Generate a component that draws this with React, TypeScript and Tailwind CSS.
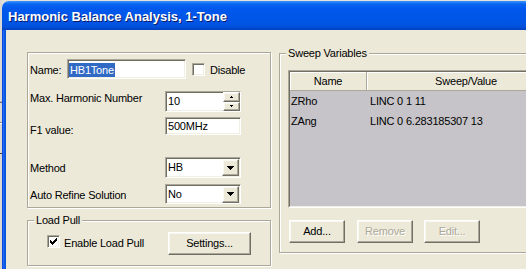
import React from "react";

const Arrow = () => (
  <svg width="7" height="4" viewBox="0 0 7 4" shapeRendering="crispEdges">
    <path d="M0 0h7v1H0zM1 1h5v1H1zM2 2h3v1H2zM3 3h1v1H3z" fill="#000" />
  </svg>
);
const SmallUp = () => (
  <svg width="5" height="3" viewBox="0 0 5 3" shapeRendering="crispEdges">
    <path d="M2 0h1v1H2zM1 1h3v1H1z" fill="#000" />
  </svg>
);
const SmallDown = () => (
  <svg width="5" height="3" viewBox="0 0 5 3" shapeRendering="crispEdges">
    <path d="M1 0h3v1H1zM2 1h1v1H2z" fill="#000" />
  </svg>
);

const sunken =
  "border border-t-[#aca899] border-l-[#aca899] border-b-white border-r-white shadow-[inset_1px_1px_0_#716f64,inset_-1px_-1px_0_#f1efe2] bg-white";
const raised =
  "border border-t-white border-l-white border-b-[#716f64] border-r-[#716f64] shadow-[inset_-1px_-1px_0_#aca899,inset_1px_1px_0_#f9f8f3] bg-[#ece9d8]";
const etched = "border border-[#aca899] shadow-[inset_1px_1px_0_#fff,1px_1px_0_#fff]";

function CheckBox({ checked }: { checked?: boolean }) {
  return (
    <div className={`w-[13px] h-[13px] shrink-0 flex items-center justify-center ${sunken}`}>
      {checked && (
        <svg width="7" height="7" viewBox="0 0 7 7" shapeRendering="crispEdges">
          <path
            d="M6 0h1v1H6zM5 1h2v1H5zM0 2h1v1H0zM4 2h3v1H4zM0 3h2v1H0zM3 3h3v1H3zM0 4h5v1H0zM1 5h3v1H1zM2 6h1v1H2z"
            fill="#000"
          />
        </svg>
      )}
    </div>
  );
}

function Combo({ value, h }: { value: string; h: string }) {
  return (
    <div className={`w-[76px] ${h} flex items-center ${sunken}`}>
      <span className="flex-1 pl-[2px]">{value}</span>
      <div className={`w-[17px] h-[17px] mr-[1px] flex items-center justify-center ${raised}`}>
        <Arrow />
      </div>
    </div>
  );
}

function Button({ label, w, disabled }: { label: string; w: string; disabled?: boolean }) {
  return (
    <div
      className={`${w} h-[23px] shrink-0 flex items-center justify-center ${raised} ${
        disabled ? "text-[#aca899] [text-shadow:1px_1px_0_#fff]" : ""
      }`}
    >
      {label}
    </div>
  );
}

function DesktopStrip() {
  return (
    <div className="w-[2px] shrink-0 flex flex-col bg-[#dad8d2]">
      <div className="h-[101px]" />
      <div className="h-[1px] bg-[#a6b8d8]" />
      <div className="h-[1px] bg-[#6d6d6d]" />
      <div className="h-[19px]" />
      <div className="h-[1px] bg-[#8c8c8c]" />
      <div className="h-[1px] bg-white" />
      <div className="h-[29px]" />
      <div className="h-[1px] bg-[#404040]" />
    </div>
  );
}

export default function App() {
  return (
    <div className="w-[526px] h-[269px] overflow-hidden flex bg-[#e2e0da] font-['Liberation_Sans',Arial,sans-serif] text-[11px] leading-[13px] tracking-[-0.2px] text-black">
      <DesktopStrip />
      <div className="flex-1 min-w-0 flex flex-col mt-[1px] rounded-tl-[7px] overflow-hidden">
        <div className="h-[29px] shrink-0 pl-[6px] pt-[8px] bg-[linear-gradient(to_bottom,#3d95ff_0%,#0a66f0_10%,#0058ee_25%,#0055e5_70%,#0052dd_88%,#0040bd_100%)] text-white font-bold text-[13px] leading-[15px] tracking-normal [text-shadow:1px_1px_0_#0a1a6b] whitespace-nowrap">
          Harmonic Balance Analysis, 1-Tone
        </div>
        <div className="flex-1 flex min-h-0">
          <div className="w-[4px] shrink-0 bg-[linear-gradient(to_right,#0831d9,#1c6bf0,#0a5be4,#0a4fd6)]" />
          <div className="flex-1 min-w-0 overflow-hidden bg-[#ece9d8] pl-[21px] pt-[17px] flex items-start">
            {/* Left column */}
            <div className="w-[244px] shrink-0 mt-[5px] flex flex-col">
              <div className={`h-[156px] pl-[2px] flex flex-col ${etched}`}>
                <div className="mt-[6px] flex items-start h-[20px]">
                  <span className="w-[37px] mt-[5px]">Name:</span>
                  <div className={`w-[119px] h-[20px] pl-[1px] pt-[3px] ${sunken}`}>
                    <span className="inline-block h-[14px] leading-[14px] px-[1px] bg-[#316ac5] text-white">HB1Tone</span>
                  </div>
                  <div className="ml-[6px] mt-[4px]">
                    <CheckBox />
                  </div>
                  <span className="ml-[5px] mt-[5px]">Disable</span>
                </div>
                <div className="mt-[12px] flex items-start">
                  <span className="w-[135px] mt-[1px]">Max. Harmonic Number</span>
                  <div className={`w-[76px] h-[21px] flex ${sunken}`}>
                    <span className="flex-1 pl-[2px] self-center">10</span>
                    <div className="w-[17px] flex flex-col">
                      <div className={`h-[10px] flex items-center justify-center ${raised}`}>
                        <SmallUp />
                      </div>
                      <div className={`h-[9px] flex items-center justify-center ${raised}`}>
                        <SmallDown />
                      </div>
                    </div>
                  </div>
                </div>
                <div className="mt-[5px] flex items-start">
                  <span className="w-[135px] mt-[7px]">F1 value:</span>
                  <div className={`w-[76px] h-[18px] flex items-center pl-[2px] ${sunken}`}>500MHz</div>
                </div>
                <div className="mt-[20px] flex items-start">
                  <span className="w-[135px] mt-[5px]">Method</span>
                  <Combo value="HB" h="h-[21px]" />
                </div>
                <div className="mt-[6px] flex items-start">
                  <span className="w-[135px] mt-[5px]">Auto Refine Solution</span>
                  <Combo value="No" h="h-[20px]" />
                </div>
              </div>
              <fieldset className={`mt-[6px] m-0 p-0 pb-[10px] min-w-0 ${etched}`}>
                <legend className="ml-[6px] px-[2px] bg-[#ece9d8]">Load Pull</legend>
                <div className="mt-[5px] pl-[19px] flex items-start">
                  <div className="mt-[3px]">
                    <CheckBox checked />
                  </div>
                  <span className="ml-[4px] mt-[5px] w-[104px]">Enable Load Pull</span>
                  <Button label="Settings..." w="w-[83px]" />
                </div>
              </fieldset>
            </div>
            {/* Right group */}
            <fieldset className={`ml-[8px] w-[270px] shrink-0 m-0 p-0 pb-[9px] min-w-0 ${etched}`}>
              <legend className="ml-[6px] px-[2px] bg-[#ece9d8]">Sweep Variables</legend>
              <div className="mt-[10px] ml-[8px] w-[260px] h-[138px] border border-t-[#aca899] border-l-[#aca899] border-b-white border-r-white">
                <div className="w-full h-full border border-t-[#716f64] border-l-[#716f64] border-b-[#f1efe2] border-r-[#f1efe2] bg-[#c6c4c8] flex flex-col">
                  <div className="h-[19px] flex shrink-0">
                    <div className="w-[77px] shrink-0 flex items-center justify-center bg-[#ece9d8] border-r border-b border-r-[#aca899] border-b-[#aca899] shadow-[inset_1px_1px_0_#fff]">
                      Name
                    </div>
                    <div className="w-[199px] shrink-0 flex items-center justify-center bg-[#ece9d8] border-r border-b border-r-[#aca899] border-b-[#aca899] shadow-[inset_1px_1px_0_#fff]">
                      Sweep/Value
                    </div>
                  </div>
                  <div className="h-[20px] flex items-center">
                    <span className="w-[77px] pl-[1px]">ZRho</span>
                    <span className="pl-[3px]">LINC 0 1 11</span>
                  </div>
                  <div className="h-[20px] flex items-center">
                    <span className="w-[77px] pl-[1px]">ZAng</span>
                    <span className="pl-[3px]">LINC 0 6.283185307 13</span>
                  </div>
                </div>
              </div>
              <div className="mt-[12px] ml-[9px] flex">
                <Button label="Add..." w="w-[56px]" />
                <div className="ml-[12px]">
                  <Button label="Remove" w="w-[56px]" disabled />
                </div>
                <div className="ml-[11px]">
                  <Button label="Edit..." w="w-[56px]" disabled />
                </div>
              </div>
            </fieldset>
          </div>
        </div>
      </div>
    </div>
  );
}
